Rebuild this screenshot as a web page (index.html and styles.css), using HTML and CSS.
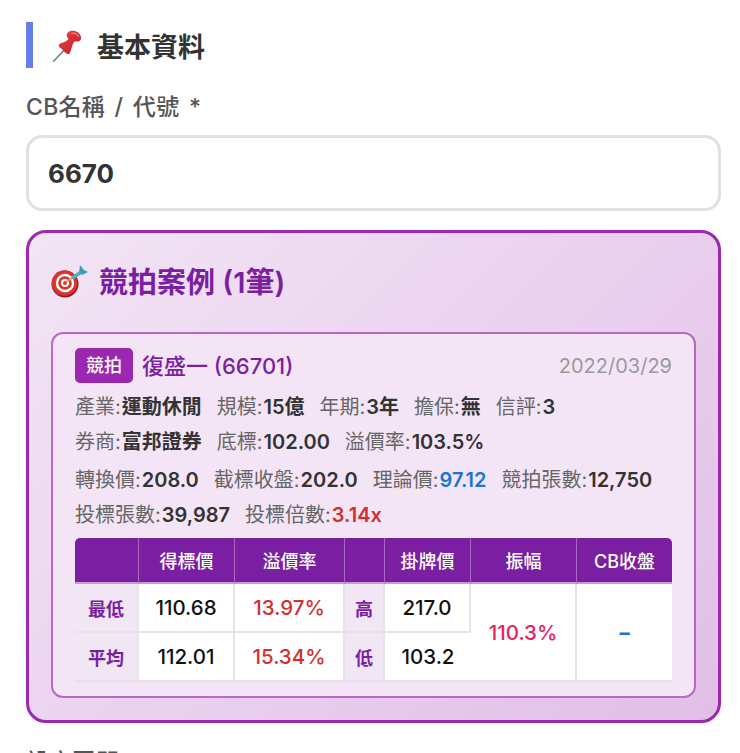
FILE: index.html
```html
<!DOCTYPE html>
<html lang="zh-Hant">
<head>
<meta charset="utf-8" />
<meta name="viewport" content="width=device-width, initial-scale=1.0">
<title>基本資料</title>
<link rel="stylesheet" href="styles.css">
</head>
<body>
<main class="page">
  <h2 class="section-title">
    <svg class="emoji emoji-pin" viewBox="0 0 40 40" aria-hidden="true">
      <defs>
        <linearGradient id="pin-red" x1="0" y1="0" x2="1" y2="1">
          <stop offset="0" stop-color="#f0444a"/>
          <stop offset="1" stop-color="#b81c22"/>
        </linearGradient>
      </defs>
      <path d="M2 38 L15 24" stroke="#6b7a8c" stroke-width="1.8" stroke-linecap="round"/>
      <path d="M8 18 C11 15 17 15 20 11 L18 8 C17 5 20 1 24 1 C28 0 34 3 35 8 C36 12 33 15 30 14 L27 14 C24 18 24 24 21 29 C18 30 14 26 12 23 C10 22 8 21 8 18 Z" fill="url(#pin-red)"/>
      <path d="M24 4 C27 3 31 5 32 8" stroke="#f98a8a" stroke-width="1.5" fill="none" stroke-linecap="round"/>
    </svg>
    <span>基本資料</span>
  </h2>

  <label class="field-label" for="cb-name">CB名稱 / 代號 <span class="req">*</span></label>
  <input class="field-input" id="cb-name" type="text" value="6670">

  <section class="auction-box">
    <h3 class="auction-title">
      <svg class="emoji emoji-target" viewBox="0 0 38 38" aria-hidden="true">
        <circle cx="14" cy="23" r="13.5" fill="#8e1c1f"/>
        <circle cx="13.5" cy="22" r="12.8" fill="#d9342f"/>
        <circle cx="14" cy="22" r="9.2" fill="#fff"/>
        <circle cx="14" cy="22" r="6.8" fill="#d9342f"/>
        <circle cx="14" cy="22" r="4" fill="#fff"/>
        <circle cx="14" cy="22" r="2" fill="#d9342f"/>
        <path d="M15 21 L23 16" stroke="#d9a441" stroke-width="1.6"/>
        <path d="M22 16.5 L31 10.5" stroke="#4fb3bf" stroke-width="3.4" stroke-linecap="round"/>
        <path d="M28 11.5 L29 4 L33 9 L37 11 L31 14 Z" fill="#3f9fb0"/>
      </svg>
      <span>競拍案例 (1筆)</span>
    </h3>

    <article class="case-card">
      <div class="case-head">
        <span class="badge">競拍</span>
        <span class="case-name">復盛一 (66701)</span>
        <span class="case-date">2022/03/29</span>
      </div>

      <div class="info-group">
        <div class="info-row">
          <span>產業:<b>運動休閒</b></span>
          <span>規模:<b>15億</b></span>
          <span>年期:<b>3年</b></span>
          <span>擔保:<b>無</b></span>
          <span>信評:<b>3</b></span>
        </div>
        <div class="info-row">
          <span>券商:<b>富邦證券</b></span>
          <span>底標:<b>102.00</b></span>
          <span>溢價率:<b>103.5%</b></span>
        </div>
      </div>
      <div class="info-group info-group-num">
        <div class="info-row">
          <span>轉換價:<b>208.0</b></span>
          <span>截標收盤:<b>202.0</b></span>
          <span>理論價:<b class="blue">97.12</b></span>
          <span>競拍張數:<b>12,750</b></span>
        </div>
        <div class="info-row">
          <span>投標張數:<b>39,987</b></span>
          <span>投標倍數:<b class="red">3.14x</b></span>
        </div>
      </div>

      <table class="case-table">
        <colgroup>
          <col class="c1"><col class="c2"><col class="c3"><col class="c4"><col class="c5"><col class="c6"><col class="c7">
        </colgroup>
        <thead>
          <tr>
            <th></th>
            <th>得標價</th>
            <th>溢價率</th>
            <th></th>
            <th>掛牌價</th>
            <th>振幅</th>
            <th>CB收盤</th>
          </tr>
        </thead>
        <tbody>
          <tr>
            <td class="row-label">最低</td>
            <td>110.68</td>
            <td class="red">13.97%</td>
            <td class="row-label">高</td>
            <td>217.0</td>
            <td class="pink" rowspan="2">110.3%</td>
            <td class="blue dash" rowspan="2">–</td>
          </tr>
          <tr>
            <td class="row-label">平均</td>
            <td>112.01</td>
            <td class="red">15.34%</td>
            <td class="row-label">低</td>
            <td>103.2</td>
          </tr>
        </tbody>
      </table>
    </article>
  </section>

  <label class="field-label next-label">設定區間</label>
</main>
</body>
</html>
```

FILE: styles.css
```css
:root {--purple: #9c27b0; --purple-dark: #7b1fa2; --text: #333; --muted: #666; --line: #e6e2e8; --red: #d32f2f; --blue: #1976d2; --pink: #e91e63;}
html {overflow: hidden;}
body {margin: 0; background-color: #fff; color: var(--text); font-family: Inter, "Noto Sans CJK TC", sans-serif;}
.page {padding: 22px 19px 0 26px;}
.section-title {display: flex; align-items: center; height: 46px; margin: 0 0 25px; padding-left: 19px; border-left: 7px solid #667eea; font-size: 27px; font-weight: 600; color: #333;}
.emoji {display: block; flex: none;}
.emoji-pin {width: 33px; height: 33px; margin-right: 12px; margin-top: 2px;}
.field-label {display: block; font-size: 23px; line-height: 28px; font-weight: 500; color: #555; word-spacing: 3px; letter-spacing: 0.3px;}
.req {color: #555;}
.field-input {display: block; box-sizing: border-box; width: 100%; height: 76px; margin-top: 14px; padding: 0 19px; border: 3px solid #e0e0e0; border-radius: 16px; background-color: #fff; color: #333; font-family: Inter, "Noto Sans CJK TC", sans-serif; font-size: 26px; font-weight: 700; outline: none;}
.auction-box {box-sizing: border-box; height: 493px; margin-top: 19px; padding: 27px 22px 0 22px; border: 3px solid var(--purple); border-radius: 20px; background: linear-gradient(135deg, #f3e5f5 0%, #e1bee7 100%);}
.auction-title {display: flex; align-items: center; height: 40px; margin: 0 0 32px; font-size: 29px; font-weight: 600; color: var(--purple-dark);}
.emoji-target {width: 38px; height: 38px; margin-right: 10px;}
.case-card {box-sizing: border-box; height: 366px; padding: 14px 22px 0; border: 2px solid #ba68c8; border-radius: 12px; background-color: #f3e5f6;}
.case-head {display: flex; align-items: center; height: 35px;}
.badge {width: 58px; height: 35px; line-height: 35px; border-radius: 5px; background-color: var(--purple); color: #fff; text-align: center; font-size: 18px; font-weight: 500;}
.case-name {margin: 0 0 3px 9px; font-size: 22px; font-weight: 500; color: var(--purple-dark);}
.case-date {margin-left: auto; font-size: 20px; color: #999;}
.info-group {margin-top: 7px;}
.info-group-num {margin-top: 3px;}
.info-row {display: flex; gap: 15px; height: 35px; line-height: 35px; font-size: 20px; color: var(--muted); white-space: nowrap;}
.info-row b {margin-left: 1px; font-weight: 600; color: var(--text);}
.info-row b.blue {color: var(--blue);}
.info-row b.red {color: var(--red);}
.case-table {width: 597px; margin-top: 5px; table-layout: fixed; border-collapse: separate; border-spacing: 0; font-size: 20.5px; font-weight: 500;}
.c1 {width: 64px;} .c2 {width: 96px;} .c3 {width: 110px;} .c4 {width: 40px;} .c5 {width: 86px;} .c6 {width: 106px;} .c7 {width: 95px;}
.case-table th {box-sizing: border-box; height: 46px; padding: 0; border-right: 1px solid #a866bf; border-bottom: 2px solid #c79bd6; background-color: var(--purple-dark); color: #fff; font-size: 18px; font-weight: 500;}
.case-table th:first-child {border-top-left-radius: 5px;}
.case-table th:last-child {border-right: 0; border-top-right-radius: 5px;}
.case-table td {box-sizing: border-box; height: 49px; padding: 0; border-right: 2px solid var(--line); border-bottom: 2px solid var(--line); background-color: #fff; color: #111; text-align: center;}
.case-table td:last-child {border-right: 0;}
.case-table .row-label {background-color: #f0e6f4; color: var(--purple-dark); font-size: 18px; font-weight: 600;}
.case-table td.red {color: var(--red);}
.case-table td.pink {color: var(--pink);}
.case-table td.blue {color: var(--blue);}
.case-table td.dash {font-weight: 700;}
.next-label {margin-top: 25px;}
```
